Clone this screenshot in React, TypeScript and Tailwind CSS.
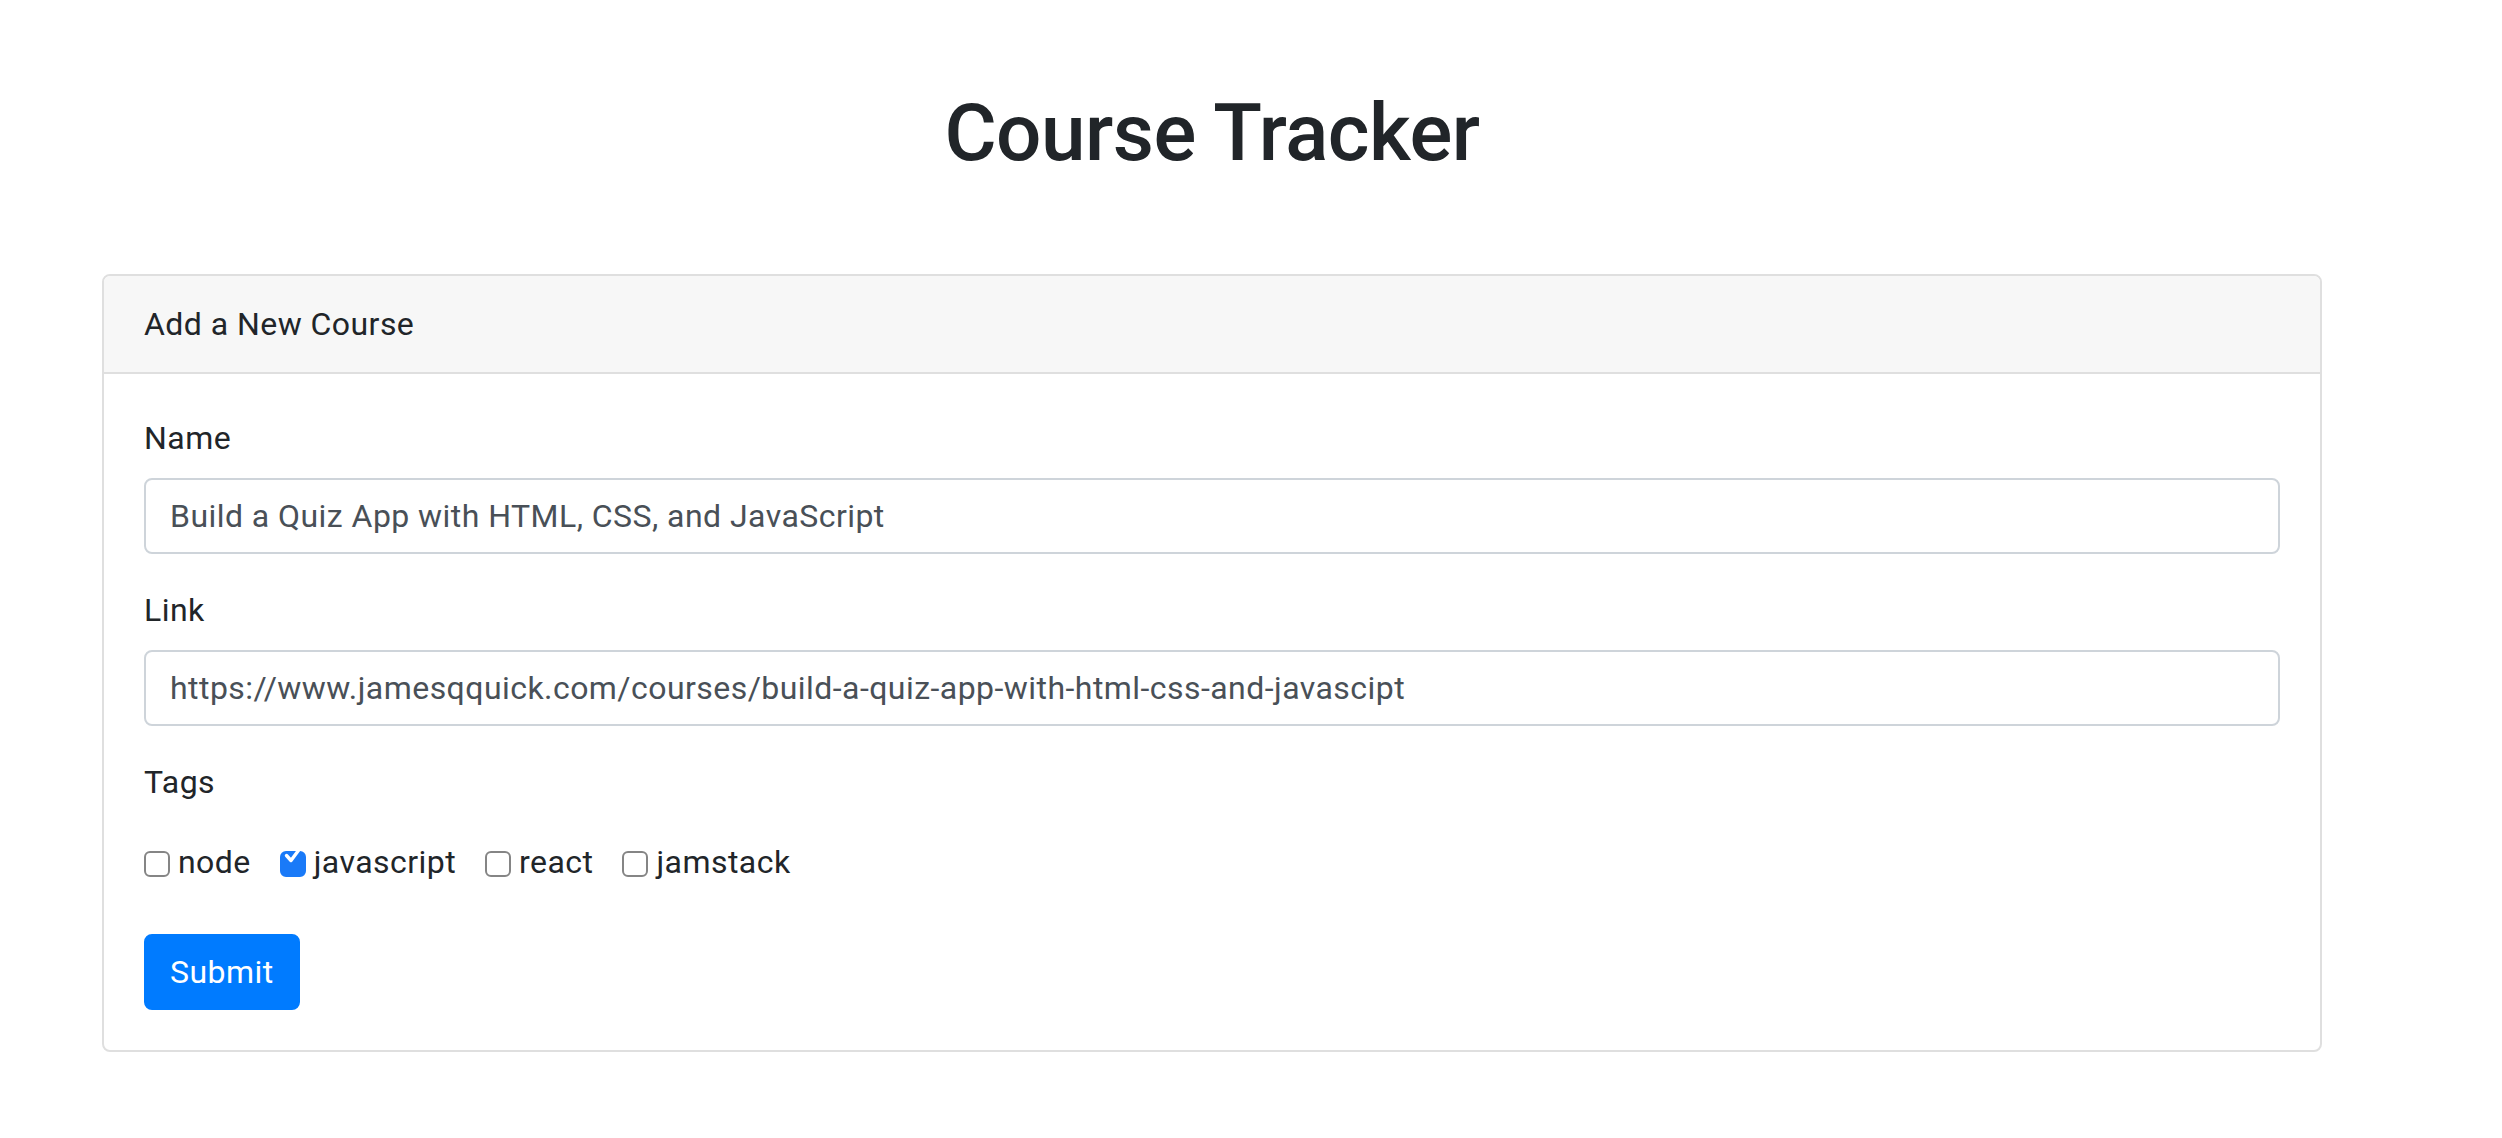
import { useState } from "react";

const TAGS = ["node", "javascript", "react", "jamstack"];

function TagCheckbox({
  label,
  checked,
  onToggle,
}: {
  label: string;
  checked: boolean;
  onToggle: () => void;
}) {
  return (
    <label className="mr-[29px] inline-flex items-baseline gap-[8px] cursor-pointer">
      <span className="relative inline-block h-[26px] w-[26px] translate-y-[4px]">
        <input
          type="checkbox"
          checked={checked}
          onChange={onToggle}
          className="h-[26px] w-[26px] cursor-pointer appearance-none rounded-[6px] border-2 border-[#858585] bg-white checked:border-[#1a7af8] checked:bg-[#1a7af8]"
        />
        {checked && (
          <svg
            viewBox="0 0 26 26"
            className="pointer-events-none absolute left-0 top-0 h-[26px] w-[26px]"
          >
            <path
              d="M6.5 13.5 L11 18.5 L19.5 7"
              fill="none"
              stroke="white"
              strokeWidth="3.4"
              strokeLinecap="round"
              strokeLinejoin="round"
            />
          </svg>
        )}
      </span>
      <span>{label}</span>
    </label>
  );
}

export default function App() {
  const [name, setName] = useState("Build a Quiz App with HTML, CSS, and JavaScript");
  const [link, setLink] = useState(
    "https://www.jamesqquick.com/courses/build-a-quiz-app-with-html-css-and-javascipt",
  );
  const [tags, setTags] = useState<string[]>(["javascript"]);

  const toggle = (tag: string) =>
    setTags((current) =>
      current.includes(tag) ? current.filter((t) => t !== tag) : [...current, tag],
    );

  return (
    <main className="min-h-screen bg-white font-[Roboto,'Liberation_Sans',sans-serif] text-[32px] leading-[48px] tracking-[0.45px] text-[#212529]">
      <div className="ml-[102px] w-[2220px] pt-[85px] pb-[60px]">
        <h1 className="mb-[93px] text-center text-[80px] font-medium leading-[96px] tracking-[-0.5px]">
          Course Tracker
        </h1>

        <section className="rounded-[8px] border-2 border-[#dfdfdf] bg-white">
          <div className="rounded-t-[6px] border-b-2 border-[#dfdfdf] bg-[#f7f7f7] px-[40px] py-[24px]">
            Add a New Course
          </div>

          <form className="p-[40px]" onSubmit={(e) => e.preventDefault()}>
            <div className="mb-[32px]">
              <label className="mb-[16px] block">Name</label>
              <input
                value={name}
                onChange={(e) => setName(e.target.value)}
                className="block h-[76px] w-full rounded-[8px] border-2 border-[#ced4da] bg-white px-[24px] py-[12px] text-[#495057] outline-none"
              />
            </div>

            <div className="mb-[32px]">
              <label className="mb-[16px] block">Link</label>
              <input
                value={link}
                onChange={(e) => setLink(e.target.value)}
                className="block h-[76px] w-full rounded-[8px] border-2 border-[#ced4da] bg-white px-[24px] py-[12px] text-[#495057] outline-none"
              />
            </div>

            <label className="mb-[32px] block">Tags</label>
            <div className="flex">
              {TAGS.map((tag) => (
                <TagCheckbox
                  key={tag}
                  label={tag}
                  checked={tags.includes(tag)}
                  onToggle={() => toggle(tag)}
                />
              ))}
            </div>

            <button
              type="submit"
              className="mt-[48px] h-[76px] rounded-[8px] border-2 border-[#007bff] bg-[#007bff] px-[24px] text-white"
            >
              Submit
            </button>
          </form>
        </section>
      </div>
    </main>
  );
}
